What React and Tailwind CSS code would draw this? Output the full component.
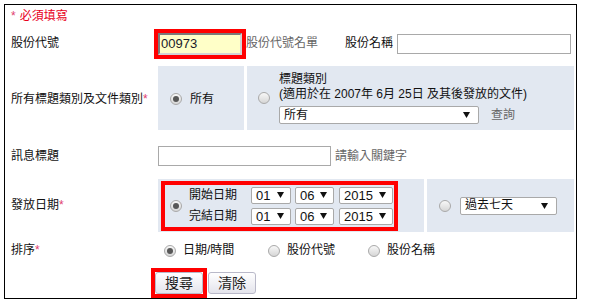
import React from "react";

const font = { fontFamily: '"Liberation Sans", "Noto Sans CJK TC", sans-serif' };

function Radio({ checked }) {
  return (
    <span className="inline-flex w-[12px] h-[12px] shrink-0 items-center justify-center rounded-full border border-[#a9a9a9] bg-linear-to-b from-[#f8f8f8] to-[#d6d6d6]">
      {checked && <span className="w-[6px] h-[6px] rounded-full bg-[#575757]" />}
    </span>
  );
}

function Arrow() {
  return (
    <svg width="7" height="6" viewBox="0 0 7 6" className="shrink-0">
      <path d="M0 0H7L3.5 6Z" fill="#111" />
    </svg>
  );
}

function Select({ value, className }) {
  return (
    <div
      className={
        "flex items-center justify-between border border-[#a9a9a9] rounded-[2px] bg-white pl-[4px] pr-[6px] text-[#111] " +
        className
      }
    >
      <span>{value}</span>
      <Arrow />
    </div>
  );
}

function Star() {
  return <span className="text-[#e0406f]">*</span>;
}

function Label({ children }) {
  return <div className="w-[153px] shrink-0 pl-[6px] text-[#111]">{children}</div>;
}

function Btn({ children, className = "" }) {
  return (
    <button
      className={
        "w-[48px] h-[22px] rounded-[3px] border border-[#b9b9c9] bg-linear-to-b from-[#ffffff] to-[#e4e4ec] text-[14px] leading-none text-[#222] " +
        className
      }
    >
      {children}
    </button>
  );
}

export default function App() {
  return (
    <div className="bg-white w-[605px] h-[304px] pt-[4px] pl-[4px] text-[12px] leading-[15px]" style={font}>
      <div className="w-[573px] h-[295px] border border-black flex flex-col">
        {/* required note */}
        <div className="h-[22px] flex items-center pl-[6px] pt-[1px]">
          <Star />
          <span className="ml-[4px] text-[#e8001c]">必須填寫</span>
        </div>

        {/* stock code */}
        <div className="h-[34px] flex items-center">
          <Label>股份代號</Label>
          <div className="flex items-center">
            <input
              readOnly
              value="00973"
              className="w-[84px] h-[22px] border-2 border-t-[#7a7a7a] border-l-[#7a7a7a] border-r-[#d4d4d4] border-b-[#d4d4d4] bg-[#ffffc8] px-[1px] text-[13px] text-[#1a1a2a] outline-4 outline-[#f00] outline-offset-0"
            />
            <span className="ml-[4px] text-[#666]">股份代號名單</span>
            <span className="ml-[27px] text-[#111]">股份名稱</span>
            <div className="ml-[4px] w-[174px] h-[20px] border border-[#a9a9a9] bg-white" />
          </div>
        </div>

        {/* title category */}
        <div className="mt-[6px] h-[64px] flex">
          <div className="w-[153px] shrink-0 pl-[6px] flex items-center pt-[2px] text-[#111]">
            <span>
              所有標題類別及文件類別
              <Star />
            </span>
          </div>
          <div className="w-[86px] bg-[#e2e8f1] flex items-center pl-[12px] gap-[8px] pt-[2px]">
            <Radio checked />
            <span className="text-[#111]">所有</span>
          </div>
          <div className="ml-[3px] w-[327px] bg-[#e2e8f1] flex items-center pl-[11px] gap-[9px]">
            <Radio />
            <div className="pt-[6px] pb-[6px] text-[#111]">
              <div>標題類別</div>
              <div>(適用於在 2007年 6月 25日 及其後發放的文件)</div>
              <div className="mt-[4px] flex items-center">
                <Select value="所有" className="w-[200px] h-[18px] pr-[8px]" />
                <span className="ml-[12px] text-[#666]">查詢</span>
              </div>
            </div>
          </div>
        </div>

        {/* message title */}
        <div className="h-[49px] flex items-center pt-[3px]">
          <Label>訊息標題</Label>
          <div className="w-[173px] h-[20px] border border-[#a9a9a9] bg-white" />
          <span className="ml-[4px] text-[#666]">請輸入關鍵字</span>
        </div>

        {/* release date */}
        <div className="h-[54px] flex">
          <div className="w-[153px] shrink-0 pl-[6px] flex items-center text-[#111]">
            <span>
              發放日期
              <Star />
            </span>
          </div>
          <div className="w-[266px] bg-[#e2e8f1] pl-[3px] pt-[2px]">
            <div className="w-[237px] h-[50px] border-4 border-[#f00] flex items-center pl-[5px]">
              <Radio checked />
              <div className="ml-[7px] flex flex-col gap-[4px]">
                <div className="flex items-center h-[17px]">
                  <span className="w-[62px] text-[#111]">開始日期</span>
                  <Select value="01" className="w-[40px] h-[17px] text-[13px]" />
                  <Select value="06" className="ml-[4px] w-[39px] h-[17px] text-[13px]" />
                  <Select value="2015" className="ml-[5px] w-[54px] h-[17px] text-[13px]" />
                </div>
                <div className="flex items-center h-[17px]">
                  <span className="w-[62px] text-[#111]">完結日期</span>
                  <Select value="01" className="w-[40px] h-[17px] text-[13px]" />
                  <Select value="06" className="ml-[4px] w-[39px] h-[17px] text-[13px]" />
                  <Select value="2015" className="ml-[5px] w-[54px] h-[17px] text-[13px]" />
                </div>
              </div>
            </div>
          </div>
          <div className="ml-[3px] w-[147px] bg-[#e2e8f1] flex items-center pl-[12px] gap-[9px]">
            <Radio />
            <Select value="過去七天" className="w-[97px] h-[18px] pr-[8px]" />
          </div>
        </div>

        {/* sort */}
        <div className="h-[36px] flex items-center pt-[1px]">
          <Label>
            排序
            <Star />
          </Label>
          <div className="flex items-center pl-[6px] text-[#111]">
            <div className="w-[104px] flex items-center gap-[7px]">
              <Radio checked />
              <span>日期/時間</span>
            </div>
            <div className="w-[100px] flex items-center gap-[7px]">
              <Radio />
              <span>股份代號</span>
            </div>
            <div className="flex items-center gap-[7px]">
              <Radio />
              <span>股份名稱</span>
            </div>
          </div>
        </div>

        {/* buttons */}
        <div className="flex items-start pl-[146px]">
          <div className="w-[56px] h-[30px] border-4 border-[#f00] flex">
            <Btn>搜尋</Btn>
          </div>
          <Btn className="ml-[1px] mt-[4px]">清除</Btn>
        </div>
      </div>
    </div>
  );
}
